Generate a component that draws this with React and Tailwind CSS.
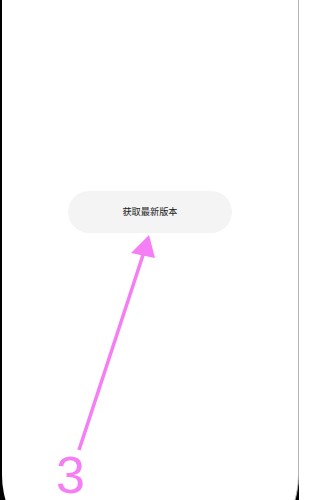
import React from 'react';

const PINK = '#f57ef4';

const Arrow = () => (
  <svg className="absolute left-0 top-0" width="299" height="500" viewBox="0 0 299 500">
    <line x1="77" y1="450" x2="142" y2="252" stroke={PINK} strokeWidth="3.5" />
    <polygon points="147,235 129,253 153,258" fill={PINK} />
  </svg>
);

const App = () => {
  return (
    <div className="h-[500px] w-[299px] overflow-hidden bg-black pl-[2px]">
      <div className="relative h-[565px] rounded-b-[90px] border-r border-[#b5b5b5] bg-white">
        <div className="flex flex-col items-center pt-[191px]">
          <button
            className="flex h-[42px] w-[164px] items-center justify-center rounded-full bg-[#f4f4f4] text-[9.2px] text-[#222]"
            style={{ fontFamily: '"Noto Sans CJK SC", "Noto Sans", sans-serif' }}
          >
            获取最新版本
          </button>
        </div>
        <Arrow />
        <span
          className="absolute left-[54px] top-[455px] text-[52px] leading-[40px] text-[#f57ef4]"
          style={{ fontFamily: '"Liberation Sans", Arial, sans-serif' }}
        >
          3
        </span>
      </div>
    </div>
  );
};

export default App;
